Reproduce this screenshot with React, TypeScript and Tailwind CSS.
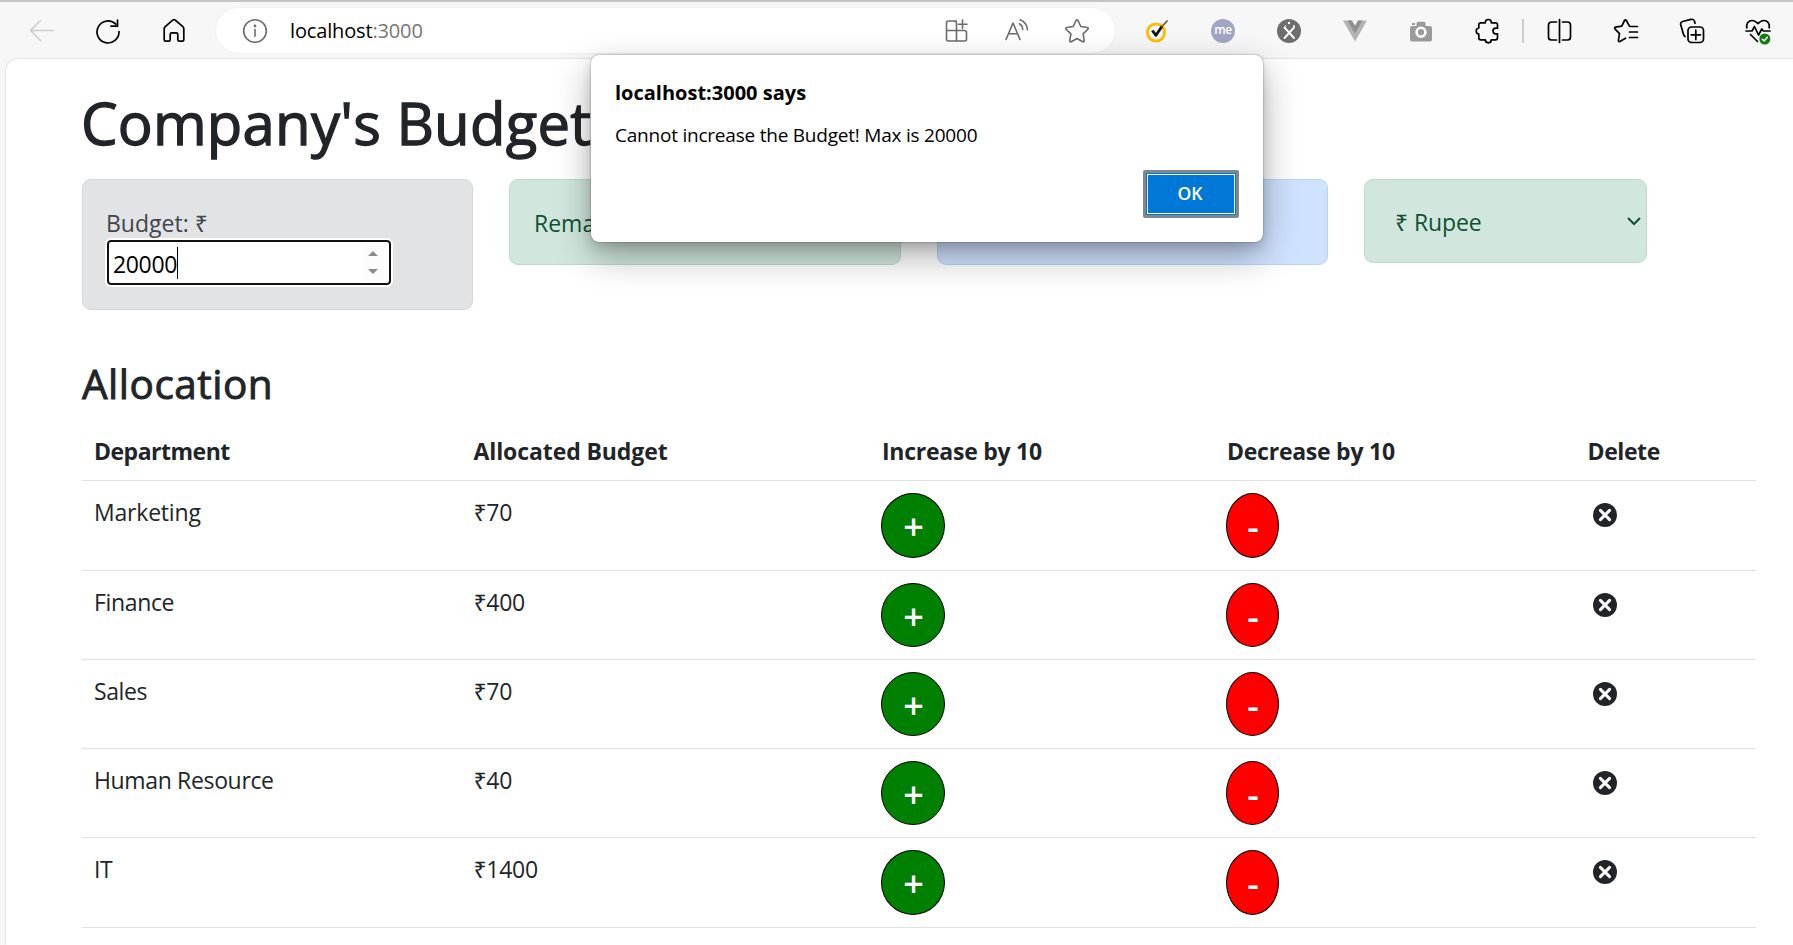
import React from "react";

const departments = [
  { name: "Marketing", amount: "₹70", nameClass: "tracking-[-0.2px]", height: "h-[90px]", button: "h-[65px]" },
  { name: "Finance", amount: "₹400", nameClass: "tracking-[-0.35px]", height: "h-[89px]", button: "h-[64px]" },
  { name: "Sales", amount: "₹70", nameClass: "tracking-[-0.4px]", height: "h-[89px]", button: "h-[64px]" },
  { name: "Human Resource", amount: "₹40", nameClass: "tracking-[-0.35px]", height: "h-[89px]", button: "h-[64px]" },
  { name: "IT", amount: "₹1400", nameClass: "tracking-[-0.3px]", height: "h-[90px]", button: "h-[65px]" },
];

function Icon({ children, className = "" }: { children: React.ReactNode; className?: string }) {
  return (
    <svg
      viewBox="0 0 26 26"
      className={`h-[26px] w-[26px] shrink-0 ${className}`}
      fill="none"
      stroke="currentColor"
      strokeWidth="1.6"
      strokeLinecap="round"
      strokeLinejoin="round"
    >
      {children}
    </svg>
  );
}

function Slot({ children, className = "w-[66px]" }: { children: React.ReactNode; className?: string }) {
  return <div className={`flex h-[26px] shrink-0 items-center justify-center ${className}`}>{children}</div>;
}

function Toolbar() {
  return (
    <header className="flex h-[59px] items-center border-t-2 border-[#c3c3c3] bg-[#f7f7f7] pl-[9px] text-black">
      <Slot>
        <Icon className="text-[#cdcdcd]">
          <path d="M24.5 12.5H1.5M11.5 2.5L1.5 12.5l10 10" />
        </Icon>
      </Slot>
      <Slot>
        <Icon>
          <path d="M20.8 6.2A11 11 0 1 0 24 13.5" strokeWidth="1.7" />
          <path d="M22.500 2v6.2h-6.5" strokeWidth="1.7" />
        </Icon>
      </Slot>
      <Slot>
        <Icon>
          <path
            strokeWidth="1.7"
            d="M3.2 10.8c0-.9.3-1.6 1-2.2L11.7 2.2c.8-.7 1.8-.7 2.6 0l7.5 6.4c.7.6 1 1.3 1 2.2v11c0 .9-.6 1.4-1.4 1.4h-3.2c-.9 0-1.4-.5-1.4-1.4v-5.3c0-1-.6-1.6-1.6-1.6h-4.4c-1 0-1.6.6-1.6 1.6v5.3c0 .9-.5 1.4-1.4 1.4H4.6c-.8 0-1.4-.5-1.4-1.4z"
          />
        </Icon>
      </Slot>
      <div className="ml-[9px] mr-[9px] flex h-[45px] w-[899px] items-center rounded-full bg-white pl-[26px] pr-[8px] shadow-[0_0_3px_rgba(0,0,0,0.06)]">
        <Icon className="text-[#6b6b6b]">
          <circle cx="13" cy="13" r="11.3" />
          <path d="M13 11.5v6.8" />
          <circle cx="13" cy="8" r="0.6" fill="currentColor" />
        </Icon>
        <div className="ml-[22px] grow text-[20px] leading-[30px] tracking-[-0.15px]">
          <span>localhost</span>
          <span className="text-[#757575]">:3000</span>
        </div>
        <Slot className="w-[60px]">
          <Icon className="text-[#6b6b6b]">
            <path d="M12.3 3H4.5C3.3 3 2.5 3.8 2.5 5v16c0 1.200.8 2 2 2h16c1.200 0 2-.8 2-2v-6.500c0-1.200-.8-2-2-2H2.500M12.500 23V5.500c0-1.500-.8-2.500-2-2.500M18.500 2v8.500M14.500 6.200h8.500" />
          </Icon>
        </Slot>
        <Slot className="w-[60px]">
          <Icon className="text-[#6b6b6b]">
            <path d="M2 21.500L9 5l7 16.500M4.500 15.800h9M15.500 5.800c2 1.200 3 3 3.200 5.700M16.300 1.800c4.200 1.700 6.700 5 7.200 10" />
          </Icon>
        </Slot>
        <Slot className="w-[60px]">
          <Icon className="text-[#6b6b6b]">
            <path d="M12.100 2.400c.4-.8 1.400-.8 1.800 0l2.900 6.100 6.500 1c.9.1 1.200 1.100.6 1.700l-4.800 4.700 1.200 6.700c.1.900-.8 1.500-1.500 1.100L13 20.500l-5.800 3.200c-.7.4-1.600-.2-1.500-1.100l1.200-6.700-4.800-4.700c-.6-.6-.3-1.600.6-1.700l6.500-1z" />
          </Icon>
        </Slot>
      </div>
      <Slot>
        <Icon>
          <circle cx="12" cy="14.500" r="8.600" stroke="#fdbe12" strokeWidth="3" />
          <path d="M8.300 12.500l3.700 4.800 6-9" stroke="#111" strokeWidth="2.800" strokeLinecap="butt" />
          <path d="M18 8.500l5-5.500" stroke="#6d5a20" strokeWidth="1.700" />
        </Icon>
      </Slot>
      <Slot>
        <div className="flex h-6 w-6 items-center justify-center rounded-full bg-[#a0a7c5] pb-[2px] text-[12px] font-semibold tracking-[-0.5px] text-white">
          me
        </div>
      </Slot>
      <Slot>
        <Icon>
          <circle cx="13" cy="13" r="12" fill="#6e6e6e" stroke="none" />
          <path d="M8.500 9.500l9.500 10.500M18 9.500L8.500 20" stroke="#fff" strokeWidth="1.900" />
          <g fill="#fff" stroke="none">
            <circle cx="13" cy="5" r="1.200" />
            <circle cx="18" cy="8" r="0.900" />
            <circle cx="9.500" cy="8" r="0.700" />
          </g>
        </Icon>
      </Slot>
      <Slot>
        <Icon>
          <path d="M1 2.500h24L13 23.500z" fill="#b3b3b3" stroke="none" />
          <path d="M5.500 2.500H10l3 5 3-5h4.500L13 15.500z" fill="#8f8f8f" stroke="none" />
          <path d="M10 2.500h6l-3 5z" fill="#f7f7f7" stroke="none" />
        </Icon>
      </Slot>
      <Slot>
        <Icon>
          <path
            d="M4 8h4.500V5.500c0-1 .7-1.700 1.700-1.700h5.600c1 0 1.700.7 1.700 1.700V8H22c1.100 0 2 .9 2 2v11.500c0 1.100-.9 2-2 2H4c-1.100 0-2-.9-2-2V10c0-1.100.9-2 2-2zM4 5h3v2H4z"
            fill="#9b9b9b"
            stroke="none"
          />
          <circle cx="13" cy="14.200" r="4.400" stroke="#fff" strokeWidth="2.600" />
        </Icon>
      </Slot>
      <Slot className="w-[68px]">
        <Icon>
          <path
            strokeWidth="1.7"
            d="M5.800 4.800h4.500c0-2.100 1-3.300 3-3.300s3 1.200 3 3.300h4.200c1.200 0 2 .8 2 2v3.400h-1.700c-1.700 0-2.800 1.100-2.800 2.800s1.100 2.800 2.800 2.800h1.700v4c0 1.200-.8 2-2 2h-4.200c0 1.800-1 3-3 3s-3-1.200-3-3H5.800c-1.200 0-2-.8-2-2V16c-1.600-.2-2.600-1.300-2.600-3s1-2.800 2.600-3V6.800c0-1.200.8-2 2-2z"
          />
        </Icon>
      </Slot>
      <Slot className="w-[5px]">
        <div className="mr-1 h-6 w-[2px] shrink-0 bg-[#cdcdcd]" />
      </Slot>
      <Slot>
        <Icon>
          <path strokeWidth="1.7" d="M9.500 4H4.500C2.700 4 1.500 5.200 1.500 7v12c0 1.800 1.200 3 3 3h5M15.500 4h5c1.800 0 3 1.200 3 3v12c0 1.800-1.200 3-3 3h-5M12.500 1.500v23" />
        </Icon>
      </Slot>
      <Slot>
        <Icon>
          <path
            strokeWidth="1.7"
            d="M16.500 8.200l-3.200-5.700c-.5-.8-1.400-.8-1.800 0L8.800 8.200l-6.300 1c-.9.200-1.200 1.100-.6 1.700l4.600 4.800-1.100 6.700c-.1 1 .8 1.500 1.500 1.100l5.600-3.300M17.500 8.500H24.500M16.500 14h8M16.500 19.500h8"
          />
        </Icon>
      </Slot>
      <Slot>
        <Icon>
          <rect x="9" y="9" width="15.500" height="15.500" rx="3.500" strokeWidth="1.7" />
          <path strokeWidth="1.7" d="M16.800 12.200v9.200M12.200 16.800h9.200M6 18.500C5 17.800 4.700 17 4.400 16L1.800 7c-.5-1.600.2-3 1.800-3.500L12 1.400c1.600-.4 3 .3 3.500 1.900l.5 2" />
        </Icon>
      </Slot>
      <Slot>
        <Icon className="overflow-visible">
          <path strokeWidth="1.7" d="M1.800 9.800C1 5.500 3.600 2.500 7 2.500c2.600 0 4.400 1.200 6 3.200 1.600-2 3.400-3.200 6-3.200 3.400 0 6 3 5.200 7.300M1 13h6l2.500-4.500 4 8.500 3.300-6 1.500 2H25M5.500 16.500l7 7" />
          <circle cx="19.800" cy="21" r="5.500" fill="#107c10" stroke="none" />
          <path d="M17.300 21.200l1.800 1.700 3.200-3.600" stroke="#fff" strokeWidth="1.500" />
        </Icon>
      </Slot>
    </header>
  );
}

function Cards() {
  const base = "rounded-[9px] border px-6 pt-[25px] text-[23px] leading-9";
  return (
    <div className="mt-[18px] flex items-start gap-9">
      <div className={`${base} h-[131px] w-[391px] border-[#d3d6d8] bg-[#e2e3e5] text-[#41464b]`}>
        <div className="ml-[-1px]">Budget: ₹</div>
        <div className="mt-[-1px] flex h-[45px] w-[284px] items-center rounded-[4px] border-2 border-[#101010] bg-white pl-1 pr-[5px] text-black outline-2 outline-white">
          <span className="pt-[2px] tracking-[-0.35px]">20000</span>
          <span className="h-8 w-px bg-black" />
          <span className="ml-auto flex h-9 w-[22px] items-center justify-center bg-[#fcfcfc]">
            <svg viewBox="0 0 10 23" className="h-[23px] w-[10px]" fill="#8b8b8b">
              <path d="M0 5L5 0l5 5zM0 18h10l-5 5z" />
            </svg>
          </span>
        </div>
      </div>
      <div className={`${base} h-[86px] w-[392px] border-[#badbcc] bg-[#d1e7dd] text-[#0f5132]`}>Remaining</div>
      <div className={`${base} h-[86px] w-[391px] border-[#b6d4fe] bg-[#cfe2ff] text-[#084298]`} />
      <div className="flex h-[84px] w-[283px] items-center justify-between rounded-[9px] border border-[#badbcc] bg-[#d1e7dd] pl-[30px] pr-[5px] pt-[2px] text-[23px] text-[#0f5132]">
        <span className="tracking-[-0.1px]">₹ Rupee</span>
        <svg viewBox="0 0 14 9" className="mb-px h-[9px] w-[14px]" fill="none" stroke="currentColor" strokeWidth="2">
          <path d="M1 1l6 6 6-6" />
        </svg>
      </div>
    </div>
  );
}

const columns = "grid grid-cols-[379.5px_408.5px_345px_360.5px_1fr] border-b border-[#dee2e6] text-[23px] leading-9";

function Allocation() {
  return (
    <section className="mt-[47px]">
      <h3 className="text-[40.5px] font-normal leading-[54px] tracking-[0.5px] [-webkit-text-stroke:0.9px_#212529]">Allocation</h3>
      <div className="mt-[8px]">
        <div className={`${columns} h-[62px] pt-[14px] font-bold`}>
          <div className="pl-3 tracking-[-0.5px]">Department</div>
          <div className="pl-3 tracking-[-0.1px]">Allocated Budget</div>
          <div className="pl-3 tracking-[-0.25px]">Increase by 10</div>
          <div className="pl-3 tracking-[-0.25px]">Decrease by 10</div>
          <div className="pl-3 tracking-[-0.4px]">Delete</div>
        </div>
        {departments.map((d) => (
          <div key={d.name} className={`${columns} ${d.height} pt-3`}>
            <div className={`pl-3 pt-px ${d.nameClass}`}>{d.name}</div>
            <div className="pl-3 pt-px tracking-[-0.3px]">{d.amount}</div>
            <div className="pl-[11px]">
              <button className={`${d.button} flex w-16 items-center justify-center rounded-[50%] border border-black bg-[#008000] pl-px pt-[3px] text-[36px] font-semibold text-white`}>
                +
              </button>
            </div>
            <div className="pl-[11px]">
              <button className={`${d.button} flex w-[53px] items-center justify-center rounded-[50%] border border-black bg-[#ff0000] pt-[3px] pl-px text-[36px] font-semibold text-white`}>
                -
              </button>
            </div>
            <div className="pl-[17.5px] pt-[10px]">
              <svg viewBox="0 0 24 24" className="h-6 w-6">
                <circle cx="12" cy="12" r="12" fill="#212529" />
                <path d="M7.400 7.400l9.200 9.200M16.600 7.400l-9.200 9.200" stroke="#fff" strokeWidth="3" strokeLinecap="round" />
              </svg>
            </div>
          </div>
        ))}
      </div>
    </section>
  );
}

function AlertDialog() {
  return (
    <div
      role="alertdialog"
      className="absolute left-[591px] top-[55px] flex h-[187px] w-[672px] flex-col rounded-[8px] bg-white px-6 pt-[23px] text-black shadow-[0_0_2px_rgba(0,0,0,0.45),0_14px_36px_rgba(0,0,0,0.32),0_6px_12px_rgba(0,0,0,0.12)]"
    >
      <div className="text-[20px] font-bold leading-[30px]">localhost:3000 says</div>
      <div className="mt-[13px] text-[19px] leading-7 tracking-[-0.22px]">Cannot increase the Budget! Max is 20000</div>
      <button className="mt-[21px] flex h-12 w-24 items-center justify-center self-end rounded-[2px] border-[3px] border-[#82878c] bg-[#0078d7] p-px text-[17.5px] font-semibold text-white">
        <span className="flex h-full w-full items-center justify-center border border-white pb-[2px] pr-[2px]">OK</span>
      </button>
    </div>
  );
}

export default function App() {
  return (
    <div className="relative h-[945px] w-[1793px] overflow-hidden bg-[#f7f7f7] font-['Open_Sans','Noto_Sans',sans-serif] text-[#212529]">
      <Toolbar />
      <main className="ml-[6px] h-[886px] rounded-tl-[12px] bg-white pl-[76px] pr-[37px] pt-[28px] shadow-[0_0_2px_rgba(0,0,0,0.25)]">
        <h1 className="mb-5 ml-[-1px] whitespace-nowrap text-[58px] font-normal leading-[72px] tracking-[0.25px] [-webkit-text-stroke:1.3px_#212529]">
          Company's Budget
        </h1>
        <Cards />
        <Allocation />
      </main>
      <AlertDialog />
    </div>
  );
}
